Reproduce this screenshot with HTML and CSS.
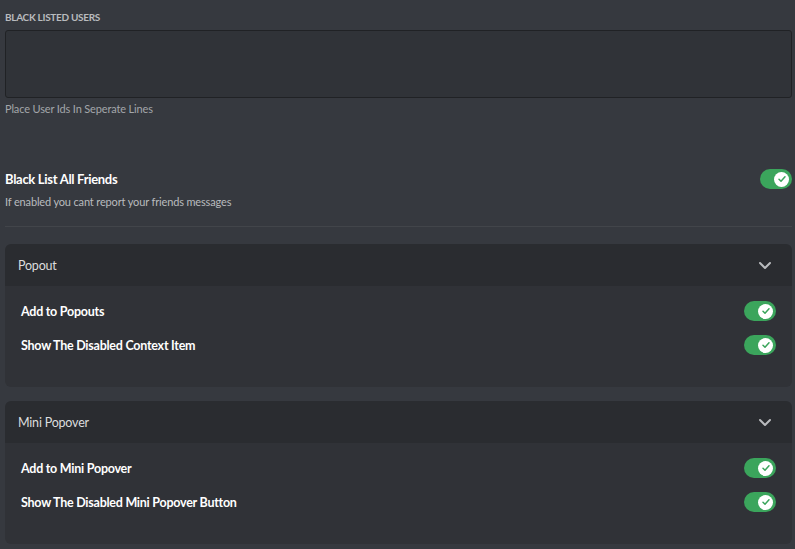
FILE: index.html
```html
<!DOCTYPE html>
<html>
<head>
<meta charset="utf-8">
<link rel="stylesheet" href="styles.css">
</head>
<body>
<div class="page">
  <div class="label">Black Listed Users</div>
  <div class="textarea"></div>
  <div class="note">Place User Ids In Seperate Lines</div>

  <div class="switch-row">
    <div class="title">Black List All Friends</div>
    <div class="toggle"><span class="knob"><svg viewBox="0 0 20 20" width="10" height="10"><path d="M4 10.5l4 4 8-9" fill="none" stroke="#3ba55c" stroke-width="3" stroke-linecap="round" stroke-linejoin="round"/></svg></span></div>
  </div>
  <div class="desc">If enabled you cant report your friends messages</div>
  <div class="divider"></div>

  <div class="card">
    <div class="card-head">
      <span>Popout</span>
      <svg class="chev" viewBox="0 0 24 24" width="24" height="24"><path d="M7 10l5 5 5-5" fill="none" stroke="#b9bbbe" stroke-width="2" stroke-linecap="round" stroke-linejoin="round"/></svg>
    </div>
    <div class="card-body">
      <div class="item"><span>Add to Popouts</span><div class="toggle"><span class="knob"><svg viewBox="0 0 20 20" width="10" height="10"><path d="M4 10.5l4 4 8-9" fill="none" stroke="#3ba55c" stroke-width="3" stroke-linecap="round" stroke-linejoin="round"/></svg></span></div></div>
      <div class="item"><span>Show The Disabled Context Item</span><div class="toggle"><span class="knob"><svg viewBox="0 0 20 20" width="10" height="10"><path d="M4 10.5l4 4 8-9" fill="none" stroke="#3ba55c" stroke-width="3" stroke-linecap="round" stroke-linejoin="round"/></svg></span></div></div>
    </div>
  </div>

  <div class="card">
    <div class="card-head">
      <span>Mini Popover</span>
      <svg class="chev" viewBox="0 0 24 24" width="24" height="24"><path d="M7 10l5 5 5-5" fill="none" stroke="#b9bbbe" stroke-width="2" stroke-linecap="round" stroke-linejoin="round"/></svg>
    </div>
    <div class="card-body">
      <div class="item"><span>Add to Mini Popover</span><div class="toggle"><span class="knob"><svg viewBox="0 0 20 20" width="10" height="10"><path d="M4 10.5l4 4 8-9" fill="none" stroke="#3ba55c" stroke-width="3" stroke-linecap="round" stroke-linejoin="round"/></svg></span></div></div>
      <div class="item"><span>Show The Disabled Mini Popover Button</span><div class="toggle"><span class="knob"><svg viewBox="0 0 20 20" width="10" height="10"><path d="M4 10.5l4 4 8-9" fill="none" stroke="#3ba55c" stroke-width="3" stroke-linecap="round" stroke-linejoin="round"/></svg></span></div></div>
    </div>
  </div>
</div>
</body>
</html>
```

FILE: styles.css
```css
html, body {
  margin: 0;
  padding: 0;
  background: #36393f;
  height: 100%;
  overflow: hidden;
}
.page {
  padding: 9px 3px 0 5px;
  font-family: Lato, "Noto Sans", sans-serif;
  color: #dcddde;
}
.label {
  font-size: 10px;
  line-height: 16px;
  font-weight: 700;
  text-transform: uppercase;
  letter-spacing: -0.3px;
  color: #b9bbbe;
}
.textarea {
  margin-top: 5px;
  height: 66px;
  background: #303338;
  border: 1px solid #202225;
  border-radius: 3px;
}
.note {
  margin-top: 3px;
  font-size: 11px;
  line-height: 16px;
  letter-spacing: -0.15px;
  color: #a3a6aa;
}
.switch-row {
  margin-top: 52px;
  display: flex;
  justify-content: space-between;
  align-items: center;
  height: 20px;
}
.title {
  font-size: 13px;
  font-weight: 700;
  letter-spacing: -0.3px;
  color: #ffffff;
}
.desc {
  margin-top: 5px;
  font-size: 11px;
  line-height: 16px;
  letter-spacing: -0.15px;
  color: #b9bbbe;
}
.divider {
  margin-top: 16px;
  height: 1px;
  background: #42454a;
}
.toggle {
  width: 32px;
  height: 20px;
  border-radius: 10px;
  background: #3ba55c;
  display: flex;
  align-items: center;
  justify-content: flex-end;
  padding-right: 3px;
  box-sizing: border-box;
  flex: none;
}
.knob {
  width: 15px;
  height: 15px;
  border-radius: 50%;
  background: #ffffff;
  display: flex;
  align-items: center;
  justify-content: center;
}
.card {
  margin-top: 17px;
  border-radius: 6px;
  overflow: hidden;
}
.card + .card {
  margin-top: 14px;
}
.card-head {
  height: 42px;
  background: #2a2c30;
  display: flex;
  align-items: center;
  justify-content: space-between;
  padding: 0 15px 0 13px;
  font-size: 12.5px;
  letter-spacing: -0.2px;
  color: #dcddde;
}
.card-body {
  background: #303237;
  padding: 8px 16px 25px 16px;
}
.item {
  height: 34px;
  display: flex;
  align-items: center;
  justify-content: space-between;
  font-size: 12.5px;
  font-weight: 700;
  letter-spacing: -0.25px;
  color: #ffffff;
}
```
